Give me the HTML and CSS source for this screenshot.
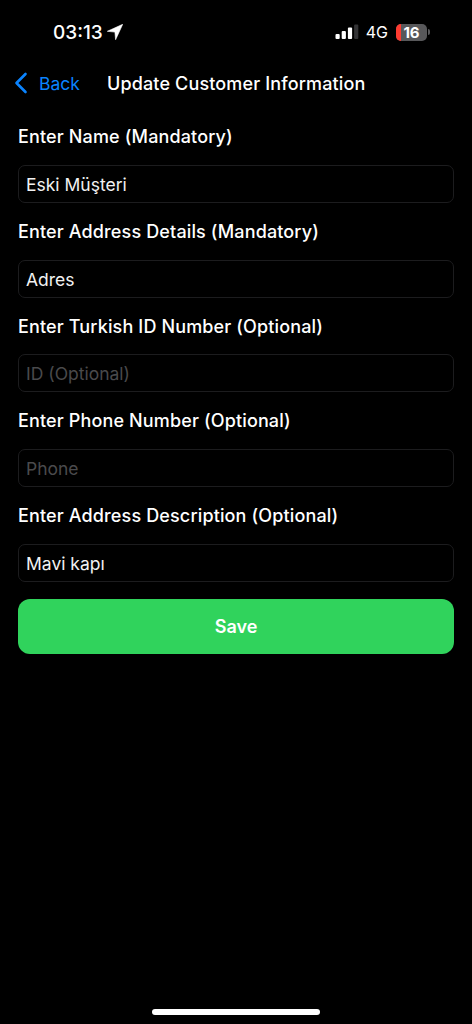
FILE: index.html
```html
<!DOCTYPE html>
<html lang="en">
<head>
<meta charset="utf-8">
<title>Update Customer Information</title>
<link rel="stylesheet" href="styles.css">
</head>
<body>
<div class="screen">
  <div class="status">
    <div class="status-left">
      <span class="time">03:13</span>
      <svg class="loc" viewBox="0 0 16 16"><path d="M15.7 0.3 L0.3 7.3 L7.9 8.1 L8.6 15.7 Z" fill="#fff" stroke="#fff" stroke-width="0.6" stroke-linejoin="round"/></svg>
    </div>
    <div class="status-right">
      <svg class="signal" viewBox="0 0 24 16"><rect x="0.5" y="10" width="4.2" height="5" rx="1" fill="#fff"/><rect x="6.7" y="7" width="4.2" height="8" rx="1" fill="#fff"/><rect x="12.9" y="3.5" width="4.2" height="11.5" rx="1" fill="#fff"/><rect x="19.1" y="0.5" width="4.2" height="14.5" rx="1" fill="#333335"/></svg>
      <span class="net">4G</span>
      <div class="battery"><span class="batt-red"></span><span class="batt-num">16</span></div>
      <span class="batt-cap"></span>
    </div>
  </div>
  <div class="nav">
    <div class="back">
      <svg class="chev" viewBox="0 0 14 22"><path d="M11.5 2 L2.5 11 L11.5 20" fill="none" stroke="#0a84ff" stroke-width="2.6" stroke-linecap="round" stroke-linejoin="round"/></svg>
      <span>Back</span>
    </div>
    <div class="title">Update Customer Information</div>
  </div>
  <form class="form">
    <label class="label">Enter Name (Mandatory)</label>
    <div class="field">Eski Müşteri</div>
    <label class="label">Enter Address Details (Mandatory)</label>
    <div class="field">Adres</div>
    <label class="label">Enter Turkish ID Number (Optional)</label>
    <div class="field placeholder">ID (Optional)</div>
    <label class="label">Enter Phone Number (Optional)</label>
    <div class="field placeholder">Phone</div>
    <label class="label">Enter Address Description (Optional)</label>
    <div class="field field-last">Mavi kapı</div>
    <div class="save">Save</div>
  </form>
  <div class="home"></div>
</div>
</body>
</html>
```
FILE: styles.css
```css
* { box-sizing: border-box; }
html, body { margin: 0; padding: 0; background: #000; }
.screen {
  width: 472px; height: 1024px; background: #000; color: #fff;
  font-family: Inter, Roboto, "Liberation Sans", sans-serif;
  display: flex; flex-direction: column; position: relative; overflow: hidden;
}
.status { height: 63px; display: flex; justify-content: space-between; padding: 21px 42px 0 53px; }
.status-left { display: flex; align-items: center; height: 22px; gap: 4px; }
.time { font-size: 19px; font-weight: 500; letter-spacing: 0; }
.loc { width: 16px; height: 16px; }
.status-right { display: flex; align-items: center; height: 22px; }
.signal { width: 24px; height: 16px; margin-right: 7px; }
.net { font-size: 16px; font-weight: 400; margin-right: 8px; }
.battery { width: 31px; height: 17px; border-radius: 5px; background: #58585a; position: relative; overflow: hidden; display: flex; align-items: center; justify-content: center; }
.batt-red { position: absolute; left: 0; top: 0; bottom: 0; width: 5px; background: #ff3b30; }
.batt-num { font-size: 15px; font-weight: 700; position: relative; }
.batt-cap { width: 2px; height: 6px; background: #58585a; border-radius: 0 2px 2px 0; margin-left: 1px; }
.nav { height: 40px; display: flex; align-items: center; padding-left: 14px; }
.back { display: flex; align-items: center; color: #0a84ff; font-size: 17.5px; width: 93px; gap: 11px; }
.chev { width: 14px; height: 22px; }
.title { font-size: 18px; font-weight: 500; white-space: nowrap; letter-spacing: 0.14px; }
.form { padding: 23px 18px 0; display: flex; flex-direction: column; }
.label { font-size: 18px; font-weight: 500; height: 22px; line-height: 22px; white-space: nowrap; margin-bottom: 16.75px; letter-spacing: 0.14px; }
.field {
  height: 38px; border: 1px solid #1c1c1e; border-radius: 7px; padding: 0 7px;
  font-size: 17.5px; line-height: 37px; margin-bottom: 18px; color: #f2f2f2;
}
.field-last { margin-bottom: 17px; }
.placeholder { color: #4a4a4c; }
.save {
  height: 55px; background: #30d35c; border-radius: 12px; color: #fff;
  font-size: 18px; font-weight: 600; display: flex; align-items: center; justify-content: center;
}
.home { position: absolute; left: 152px; bottom: 9px; width: 168px; height: 6px; border-radius: 3px; background: #fff; }
```
